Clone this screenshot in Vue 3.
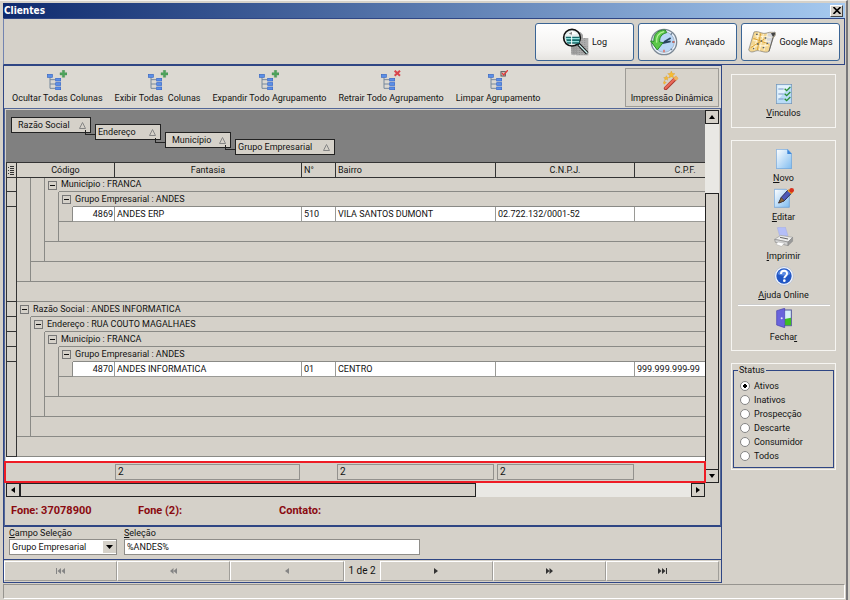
<script setup>
import { ref } from 'vue'

const treeActions = [
  { label: 'Ocultar Todas Colunas', badge: 'plus' },
  { label: 'Exibir Todas  Colunas', badge: 'plus' },
  { label: 'Expandir Todo Agrupamento', badge: 'plus' },
  { label: 'Retrair Todo Agrupamento', badge: 'cross' },
  { label: 'Limpar Agrupamento', badge: 'check' }
]

const groupFields = ['Razão Social', 'Endereço', 'Município', 'Grupo Empresarial']

const rows = [
  { kind: 'group', level: 2, text: 'Município : FRANCA', first: true },
  { kind: 'group', level: 3, text: 'Grupo Empresarial : ANDES' },
  { kind: 'data', cells: ['4869', 'ANDES ERP', '510', 'VILA SANTOS DUMONT', '02.722.132/0001-52', ''] },
  { kind: 'footer', level: 3 },
  { kind: 'footer', level: 2 },
  { kind: 'footer', level: 1 },
  { kind: 'footer', level: 0 },
  { kind: 'group', level: 0, text: 'Razão Social : ANDES INFORMATICA' },
  { kind: 'group', level: 1, text: 'Endereço : RUA COUTO MAGALHAES' },
  { kind: 'group', level: 2, text: 'Município : FRANCA' },
  { kind: 'group', level: 3, text: 'Grupo Empresarial : ANDES' },
  { kind: 'data', cells: ['4870', 'ANDES INFORMATICA', '01', 'CENTRO', '', '999.999.999-99'] },
  { kind: 'footer', level: 3 },
  { kind: 'footer', level: 2 },
  { kind: 'footer', level: 1 },
  { kind: 'footer', level: 0 }
]

const statuses = ['Ativos', 'Inativos', 'Prospecção', 'Descarte', 'Consumidor', 'Todos']
const status = ref('Ativos')
const field = ref('Grupo Empresarial')
const query = ref('%ANDES%')
</script>

<template>
  <div class="window">
    <header class="titlebar">
      <h1>Clientes</h1>
      <button class="close" aria-label="Fechar janela">
        <svg width="8" height="7" viewBox="0 0 8 7"><path d="M0.5 0 7.5 7M7.5 0 0.5 7" stroke="#000" stroke-width="1.6" /></svg>
      </button>
    </header>

    <div class="topbar">
      <button class="big">
        <svg width="27" height="28" viewBox="0 0 81 84">
          <path d="M25 12h30l8 8v60H28z" fill="#a4a4a4" />
          <path d="M45 30h34v52H45z" fill="#adadad" />
          <path d="M28 56h50M28 62h50M28 68h50M28 74h50M36 50v32M44 50v32M52 30v52M60 30v52M68 30v52" stroke="#858585" stroke-width="2" stroke-dasharray="3 3" />
          <circle cx="30" cy="29" r="25" fill="#e4eeee" stroke="#111" stroke-width="5" />
          <path d="M14 20 30 8l16 10z" fill="#fff" />
          <path d="M20 17l10-6v9z" fill="#888" />
          <path d="M11 26h42v21H16z" fill="#176b6b" />
          <path d="M11 32h42M13 41h38" stroke="#8fe0dc" stroke-width="4" />
          <path d="M29 24v26" stroke="#fff" stroke-width="3" />
          <path d="M49 48 76 76" stroke="#111" stroke-width="10" />
          <path d="M51 50 76 76" stroke="#c9f0ee" stroke-width="4" />
        </svg>
        <span>Log</span>
      </button>
      <button class="big">
        <svg width="28" height="28" viewBox="0 0 84 84">
          <circle cx="42" cy="42" r="38" fill="#e9f1fb" stroke="#7c8894" stroke-width="4" />
          <circle cx="42" cy="42" r="31" fill="#b9d6f6" stroke="#a9bacd" stroke-width="3" />
          <path d="M42 42 62 30M34 46l28-6" stroke="#28455f" stroke-width="5" />
          <path d="M66 42h8M62 62l4 4M62 20l4-4" stroke="#6a7f94" stroke-width="4" />
          <path d="M42 65v8M68 42h5" stroke="#e8604c" stroke-width="4" />
          <path d="M46 6C22 5 10 20 12 40L2 39l20 27 17-22-10-2C28 28 34 18 50 14z" fill="#5cc84a" stroke="#2b8a2b" stroke-width="3" />
          <path d="M42 11C25 15 18 26 20 44" fill="none" stroke="#b6f09a" stroke-width="4" />
        </svg>
        <span>Avançado</span>
      </button>
      <button class="big maps">
        <svg width="28" height="24" viewBox="0 0 84 72">
          <path d="M18 6c14-5 24 8 38 3s20 0 25-3c4 5 0 14-5 17L63 64c-13 8-28-6-40-1S6 66 2 60z" fill="#f3d690" stroke="#777" stroke-width="2" />
          <path d="M58 9c8 3 16-3 22-2 3 6-2 12-6 15L68 44 52 36z" fill="#d5d8de" />
          <path d="M22 18 70 22M16 32l51 2M10 48l51-1M32 8 18 60M46 12 34 62M58 12 48 62" stroke="#fff6dc" stroke-width="3" />
          <path d="M16 25 62 42M38 10 28 60M8 53l40-25" stroke="#dba436" stroke-width="3" />
          <path d="M24 13h5M50 24h5M27 42h5M44 53h5M15 56h4M38 33h4M56 40h4" stroke="#54626e" stroke-width="4" />
          <path d="M69 10c4-2 9-3 12-2 1 5-2 10-6 13z" fill="#444" />
          <path d="M75 22 63 64" fill="none" stroke="#666" stroke-width="3" />
        </svg>
        <span>Google Maps</span>
      </button>
    </div>

    <div class="content">
      <main class="main">
        <nav class="toolbar" aria-label="Colunas e agrupamento">
          <button v-for="a in treeActions" :key="a.label" class="tool">
            <svg width="20" height="20" viewBox="0 0 60 60">
              <path d="M9 22v33h16M9 29h16M9 42h16" fill="none" stroke="#77889c" stroke-width="3" />
              <rect x="1" y="13" width="15" height="9" fill="#5b8fe8" stroke="#3a68c0" stroke-width="2" />
              <rect x="26" y="25" width="15" height="8" fill="#5b8fe8" stroke="#3566c8" stroke-width="2" />
              <rect x="26" y="38" width="15" height="8" fill="#5b8fe8" stroke="#3566c8" stroke-width="2" />
              <rect x="26" y="51" width="15" height="8" fill="#5b8fe8" stroke="#3566c8" stroke-width="2" />
              <path v-if="a.badge === 'plus'" d="M46 1h7v7h7v7h-7v7h-7v-7h-7V8h7z" fill="#4ea35c" stroke="#3b8a4a" />
              <path v-else-if="a.badge === 'cross'" d="M41 2 57 17M57 2 41 17" stroke="#d8444c" stroke-width="6" />
              <g v-else fill="none">
                <rect x="39" y="5" width="13" height="13" stroke="#555" stroke-width="3" />
                <path d="M42 9l5 6L60 0" stroke="#e23a3a" stroke-width="4" />
              </g>
            </svg>
            <span>{{ a.label }}</span>
          </button>
          <button class="tool framed">
            <svg width="17" height="19" viewBox="0 0 51 57">
              <path d="M8 52 38 22" stroke="#a93a32" stroke-width="11" stroke-linecap="round" />
              <path d="M8 51 35 24" stroke="#ea6a58" stroke-width="7" stroke-linecap="round" />
              <path d="M35 25 43 18" stroke="#f0b45c" stroke-width="11" />
              <path d="M25 0l3 7 8 1-6 5 2 8-7-4-7 4 2-8-6-5 8-1zM10 14l2 5 5 1-4 3 1 5-4-3-5 3 1-5-4-3 6-1zM4 29l2 4 4 1-3 3-3 3-3-4z" fill="#f6bd32" stroke="#d8952a" />
            </svg>
            <span>Impressão Dinâmica</span>
          </button>
        </nav>

        <section class="gridpanel">
          <div class="gridarea">
            <div class="gridview">
              <div class="groupbox">
                <button v-for="(g, i) in groupFields" :key="g" class="chip" :class="'chip' + i">
                  <span>{{ g }}</span>
                  <svg width="7" height="7" viewBox="0 0 7 7"><path d="M3.5 0.5 6.5 6.5h-6z" fill="none" stroke="#858585" /></svg>
                </button>
              </div>
              <div class="tablewrap">
                <table>
                  <colgroup>
                    <col class="c-ind"><col class="c-in"><col class="c-in"><col class="c-in"><col class="c-in">
                    <col class="c-cod"><col class="c-fan"><col class="c-num"><col class="c-bai"><col class="c-cnpj"><col>
                  </colgroup>
                  <thead>
                    <tr>
                      <th class="ind">
                        <svg width="7" height="9" viewBox="0 0 7 9"><path d="M0 1.5h1M0 4.5h1M0 7.5h1M2 .5h4M2 2.5h4M2 4.5h4M2 6.5h4M2 8.5h4" stroke="#333" /></svg>
                      </th>
                      <th colspan="5">Código</th>
                      <th>Fantasia</th>
                      <th class="left">N°</th>
                      <th class="left">Bairro</th>
                      <th>C.N.P.J.</th>
                      <th>C.P.F.</th>
                    </tr>
                  </thead>
                  <tbody>
                    <tr v-for="(r, i) in rows" :key="i" :class="[r.kind, { first: r.first, outer: r.kind === 'footer' && r.level === 0 }]">
                      <template v-if="r.kind === 'group'">
                        <td class="ind"></td>
                        <td v-for="n in r.level" :key="n" class="indent"></td>
                        <td class="exp"><button class="expander" aria-label="Recolher grupo"></button></td>
                        <td class="gtext" :colspan="9 - r.level">{{ r.text }}</td>
                      </template>
                      <template v-else-if="r.kind === 'data'">
                        <td class="ind" rowspan="5"></td>
                        <td v-for="n in 4" :key="n" class="indent" :class="{ under: n === 4 }"></td>
                        <td v-for="(c, j) in r.cells" :key="'c' + j" class="val" :class="{ num: j === 0 }">{{ c }}</td>
                      </template>
                      <template v-else>
                        <td v-for="n in r.level" :key="n" class="indent" :class="{ under: n === r.level }"></td>
                        <td class="foot" :colspan="10 - r.level"></td>
                      </template>
                    </tr>
                  </tbody>
                </table>
              </div>
              <div class="summary">
                <output class="s-fan">2</output>
                <output class="s-bai">2</output>
                <output class="s-cnpj">2</output>
              </div>
            </div>
            <div class="vscroll">
              <button class="sb" aria-label="Rolar para cima"><svg width="6" height="4" viewBox="0 0 6 4"><path d="M0 4 3 0l3 4z" /></svg></button>
              <div class="vtrack"><div class="vthumb"></div></div>
              <button class="sb" aria-label="Rolar para baixo"><svg width="6" height="4" viewBox="0 0 6 4"><path d="M0 0h6L3 4z" /></svg></button>
            </div>
          </div>
          <div class="hscroll">
            <button class="sb" aria-label="Rolar para a esquerda"><svg width="4" height="6" viewBox="0 0 4 6"><path d="M4 0v6L0 3z" /></svg></button>
            <div class="htrack"><div class="hthumb"></div></div>
            <button class="sb" aria-label="Rolar para a direita"><svg width="4" height="6" viewBox="0 0 4 6"><path d="M0 0v6l4-3z" /></svg></button>
          </div>
          <div class="phones">
            <span>Fone: 37078900</span><span>Fone (2):</span><span>Contato:</span>
          </div>
        </section>

        <form class="filter" @submit.prevent>
          <div class="f-field">
            <label for="campo"><u>C</u>ampo Seleção</label>
            <div class="selectwrap">
              <select id="campo" v-model="field"><option>Grupo Empresarial</option></select>
              <svg width="7" height="4" viewBox="0 0 7 4"><path d="M0 0h7L3.5 4z" /></svg>
            </div>
          </div>
          <div class="f-query">
            <label for="selecao"><u>S</u>eleção</label>
            <input id="selecao" v-model="query" type="text">
          </div>
        </form>

        <nav class="pager" aria-label="Registros">
          <button disabled aria-label="Primeiro"><svg width="9" height="6" viewBox="0 0 9 6"><path d="M0 0h1v6H0zM5 0v6L1.5 3zM9 0v6L5.5 3z" fill="#858585" /></svg></button>
          <button disabled aria-label="Página anterior"><svg width="7" height="6" viewBox="0 0 7 6"><path d="M3.5 0v6L0 3zM7 0v6L3.5 3z" fill="#858585" /></svg></button>
          <button disabled aria-label="Anterior"><svg width="4" height="6" viewBox="0 0 4 6"><path d="M4 0v6L0 3z" fill="#858585" /></svg></button>
          <span>1 de 2</span>
          <button aria-label="Próximo"><svg width="4" height="6" viewBox="0 0 4 6"><path d="M0 0v6l4-3z" fill="#333" /></svg></button>
          <button aria-label="Próxima página"><svg width="7" height="6" viewBox="0 0 7 6"><path d="M0 0v6l3.5-3zM3.5 0v6L7 3z" fill="#333" /></svg></button>
          <button aria-label="Último"><svg width="9" height="6" viewBox="0 0 9 6"><path d="M0 0v6l3.5-3zM4 0v6l3.5-3zM8 0h1v6H8z" fill="#333" /></svg></button>
        </nav>
      </main>

      <aside class="side">
        <div class="panel links">
          <button class="act">
            <svg width="16" height="20" viewBox="0 0 48 60">
              <rect x="1" y="1" width="46" height="58" fill="#b9dcf7" stroke="#6f93b8" stroke-width="2" />
              <path d="M4 4h40L4 50z" fill="#e3f2fd" />
              <path d="M7 15h16M7 30h16M7 45h16" stroke="#7795c4" stroke-width="3" />
              <path d="M26 14l6 6L43 9M26 29l6 6 11-11M26 44l6 6 11-11" fill="none" stroke="#2a8f35" stroke-width="4" />
            </svg>
            <span><u>V</u>inculos</span>
          </button>
        </div>

        <div class="panel actions">
          <button class="act">
            <svg width="16" height="20" viewBox="0 0 48 60">
              <defs><linearGradient id="sheet" x1="0" y1="0" x2="1" y2="1"><stop offset="0" stop-color="#fff" /><stop offset="1" stop-color="#7fbcf0" /></linearGradient></defs>
              <path d="M1 1h34l12 13v45H1z" fill="url(#sheet)" stroke="#5f9ad8" stroke-width="2" />
              <path d="M34 1v14h13z" fill="#3d86d8" />
            </svg>
            <span><u>N</u>ovo</span>
          </button>
          <button class="act">
            <svg width="20" height="20" viewBox="0 0 60 60">
              <path d="M1 4h36l9 10v44H1z" fill="url(#sheet)" stroke="#5f9ad8" stroke-width="2" />
              <path d="M14 45 22 28 42 6l11 9-23 24z" fill="#4d59b8" stroke="#2b2b55" stroke-width="3" />
              <path d="M14 45 22 29l9 9z" fill="#8c6a3a" stroke="#4d3a22" stroke-width="2" />
              <path d="M40 8l5-5 12 10-5 6z" fill="#e8a325" />
              <circle cx="53" cy="7" r="7" fill="#d8301c" />
            </svg>
            <span><u>E</u>ditar</span>
          </button>
          <button class="act">
            <svg width="20" height="20" viewBox="0 0 60 60">
              <path d="M10 2c8-3 15 1 24-2l8 26-24 5z" fill="#b4bef8" stroke="#96a2e0" />
              <path d="M2 37 20 25l36 6-14 14z" fill="#ececec" stroke="#9a9a9a" stroke-width="2" />
              <path d="M2 37l40 8v11L4 46z" fill="#d2d2d2" stroke="#8a8a8a" stroke-width="2" />
              <path d="M42 45l14-14v12L42 56z" fill="#9a9a9a" stroke="#777" />
              <path d="M12 45 32 49 22 58 6 52z" fill="#fff" stroke="#999" />
              <path d="M18 31l24 5" stroke="#666" stroke-width="3" />
            </svg>
            <span><u>I</u>mprimir</span>
          </button>
          <button class="act">
            <svg width="20" height="20" viewBox="0 0 60 60">
              <circle cx="30" cy="30" r="28" fill="#f5f8fe" stroke="#a9b6cf" stroke-width="2" />
              <circle cx="30" cy="30" r="23" fill="#2257c4" />
              <path d="M11 24a20 20 0 0 1 38 0c-12 6-26 6-38 0z" fill="#5d8ce4" />
              <path d="M21 24c0-13 19-12 18-1 0 7-8 7-8 14" fill="none" stroke="#fff" stroke-width="6" />
              <circle cx="31" cy="44" r="4" fill="#fff" />
            </svg>
            <span><u>A</u>juda Online</span>
          </button>
          <hr>
          <button class="act">
            <svg width="16" height="20" viewBox="0 0 48 60">
              <rect x="18" y="6" width="28" height="47" fill="#d8f0fb" stroke="#52569a" stroke-width="3" />
              <path d="M26 33l19-4v23H26z" fill="#3fbf22" />
              <path d="M2 8 26 1v58L2 51z" fill="#6a64dc" stroke="#453fae" stroke-width="2" />
              <circle cx="17" cy="31" r="3" fill="#e8e8ff" />
            </svg>
            <span>Fecha<u>r</u></span>
          </button>
        </div>

        <div class="panel statusbox">
          <fieldset>
            <legend>Status</legend>
            <label v-for="s in statuses" :key="s"><input v-model="status" type="radio" name="status" :value="s"><span>{{ s }}</span></label>
          </fieldset>
        </div>
      </aside>
    </div>

    <footer class="statusbar"></footer>
  </div>
</template>

<style>
body { background: #d5d1c9; }
</style>

<style scoped>
.window {
  --face: #d5d1c9;
  --navy: #2f4684;
  box-sizing: border-box;
  min-height: 100vh;
  display: flex;
  flex-direction: column;
  padding: 2px 1px 1px 3px;
  border-top: 1px solid #f4f2ee;
  border-right: 2px solid #77777a;
  margin-right: 2px;
  background: var(--face);
  color: #111;
  font: 9px/14px Roboto, sans-serif;
}
.window * { box-sizing: border-box; }
button, input, select { font: inherit; color: inherit; margin: 0; }
button { padding: 0; border: 0; background: none; border-radius: 0; }
svg { display: block; flex: none; }

.titlebar {
  height: 15px;
  display: flex;
  align-items: center;
  justify-content: space-between;
  padding: 0 2px 0 1px;
  background: linear-gradient(90deg, #0e2a6e, #a6caf0);
}
h1 { margin: 0; color: #fff; font: bold 10px/14px "DejaVu Sans Condensed", sans-serif; }
.close {
  width: 13px; height: 12px;
  display: flex; align-items: center; justify-content: center;
  background: var(--face);
  border: 1px solid; border-color: #fff #444 #444 #fff;
}

.topbar {
  height: 47px;
  display: flex;
  justify-content: flex-end;
  align-items: center;
  gap: 4px;
  padding: 0 4px;
  border: 1px solid var(--navy);
  border-left-color: #7384b0;
}
.big {
  width: 99px; height: 38px;
  display: flex; align-items: center; justify-content: center;
  gap: 3px;
  border: 1px solid #3b6595;
  border-radius: 3px;
  background: linear-gradient(#fff, #f3f2f0 70%, #e6e4e0);
}
.big:nth-child(2) { gap: 7px; }

.content { flex: 1; display: flex; }
.main {
  flex: 1; min-width: 0;
  display: flex; flex-direction: column;
  border: 1px solid var(--navy);
}
.toolbar {
  height: 42px;
  display: flex;
  align-items: center;
  gap: 12px;
  padding: 0 2px 0 8px;
  background: #dcd9d2;
}
.tool { display: flex; flex-direction: column; align-items: center; gap: 1px; white-space: pre; }
.framed { margin-left: auto; padding: 2px 5px; height: 39px; border: 1px solid #9d9b96; background: #d7d3cb; }

.gridpanel {
  flex: 1;
  display: flex; flex-direction: column;
  border: 1px solid #536797;
  border-bottom: 2px solid var(--navy);
  padding: 1px 1px 0 1px;
}
.gridarea { flex: 1; display: flex; }
.gridview { flex: 1; min-width: 0; display: flex; flex-direction: column; }
.groupbox {
  height: 52px;
  display: flex; align-items: flex-start;
  gap: 4px;
  padding: 7px 5px;
  background: #808080;
}
.chip {
  position: relative;
  height: 16px;
  display: flex; align-items: center; justify-content: space-between;
  padding: 0 4px 0 2px;
  border: 1px solid #222;
  background: var(--face);
  white-space: nowrap;
}
.chip0 { width: 80px; padding-left: 6px; }
.chip1 { width: 66px; margin-top: 7px; }
.chip2 { width: 66px; margin-top: 15px; padding-left: 6px; }
.chip3 { width: 100px; margin-top: 22px; }
/* elbow joining a chip to the one before it */
.chip + .chip::before {
  content: "";
  position: absolute;
  right: 100%; bottom: 4px;
  width: 10px; height: 4px;
  border: solid #222; border-width: 0 0 1px 1px;
}

.tablewrap { flex: 1; overflow: hidden; background: #fff; }
table {
  width: calc(100% + 31px);
  table-layout: fixed;
  border-collapse: separate;
  border-spacing: 0;
}
.c-ind { width: 11px; }
.c-in { width: 14px; }
.c-cod { width: 42px; }
.c-fan { width: 187px; }
.c-num { width: 34px; }
.c-bai { width: 160px; }
.c-cnpj { width: 139px; }
td, th {
  height: 15px;
  padding: 0;
  background: var(--face);
  font-weight: normal;
  line-height: 13px;
  white-space: nowrap;
  overflow: hidden;
}
th { height: 16px; border: solid #333; border-width: 1px 1px 1px 0; }
th.left { text-align: left; padding-left: 2px; }
.ind { border: solid #333; border-width: 0 1px 1px 1px; }
th.ind { border-top-width: 1px; padding-left: 1px; }
.first td { height: 14px; }
.indent { border-right: 1px solid #8a8a86; }
.under, .foot, .gtext { border-bottom: 1px solid #8a8a86; }
.gtext { padding-left: 2px; }
.footer td { height: 20px; }
.val { padding-left: 2px; background: #fff; border: solid #9a9a96; border-width: 0 1px 1px 0; }
.num { text-align: right; padding: 0 1px 0 0; }
.expander {
  display: block;
  width: 9px; height: 9px;
  margin: 0 auto;
  border: 1px solid #777;
  background: linear-gradient(#111, #111) center / 5px 1px no-repeat;
}

.summary {
  height: 22px;
  margin: 0 -1px 0 -2px;
  display: grid;
  grid-template-columns: 109px 185px 37px 157px 3px 137px 1fr;
  align-items: center;
  border: 2px solid #ee1c25;
  font-size: 10px;
  position: relative;
}
.summary output { height: 16px; padding-left: 2px; border: 1px solid #93918d; }
.s-fan { grid-column: 2; }
.s-bai { grid-column: 4; }
.s-cnpj { grid-column: 6; }

.sb {
  width: 14px; height: 14px;
  display: flex; align-items: center; justify-content: center;
  border: 1px solid #222;
  background: var(--face);
}
.vscroll { width: 14px; display: flex; flex-direction: column; }
.vtrack { flex: 1; display: flex; flex-direction: column; justify-content: flex-end; background: #e9e8e4; }
.vthumb { height: 80%; border: 1px solid #222; border-bottom: 0; background: var(--face); }
.hscroll { display: flex; padding-right: 14px; }
.htrack { flex: 1; background: #e9e8e4; }
.hthumb { width: 68%; height: 14px; border: 1px solid #222; background: var(--face); }
.phones {
  height: 28px;
  display: grid;
  grid-template-columns: 127px 141px 1fr;
  align-items: center;
  padding-left: 5px;
  color: #8a0a10;
  font-weight: bold;
  font-size: 11px;
}

.filter { height: 33px; display: flex; gap: 7px; padding: 0 5px; border-bottom: 1px solid var(--navy); }
.filter label { display: block; height: 12px; line-height: 13px; }
.f-field { width: 108px; }
.f-query { width: 296px; }
.filter input, .filter select {
  display: block;
  width: 100%; height: 16px;
  padding: 0 2px;
  border: 1px solid #8f8d89;
  border-radius: 0;
  background: #fff;
  appearance: none;
}
.selectwrap { display: grid; align-items: center; }
.selectwrap > * { grid-area: 1 / 1; }
.selectwrap svg { justify-self: end; width: 13px; height: 12px; padding: 4px 3px; margin-right: 1px; background: var(--face); pointer-events: none; }

.pager { height: 22px; display: flex; padding: 1px 2px 1px 0; }
.pager button {
  flex: 1;
  display: flex; align-items: center; justify-content: center;
  border: 1px solid; border-color: #fff #a09e99 #a09e99 #fff;
}
.pager span { width: 36px; display: flex; align-items: center; justify-content: center; font-size: 10px; border-left: 1px solid #fff; }

.side { width: 123px; padding: 9px 9px; display: flex; flex-direction: column; gap: 12px; }
.panel { width: 105px; border: 1px solid #f6f5f2; }
.act { display: flex; flex-direction: column; align-items: center; width: 100%; line-height: 14px; gap: 2px; }
.links { height: 54px; padding-top: 9px; }
.actions { height: 211px; padding-top: 8px; display: flex; flex-direction: column; gap: 3px; }
hr { width: 92px; height: 2px; margin: -1px auto; border: 0; border-bottom: 1px solid #fff; flex: none; background: #ccc; }
.statusbox { height: 107px; padding: 0 1px 1px; }
fieldset { margin: 0; padding: 3px 0 0 6px; min-width: 0; height: 104px; border: 1px solid var(--navy); }
legend { margin-left: -2px; padding: 0 1px; line-height: 12px; }
fieldset label { display: flex; align-items: center; gap: 4px; height: 14px; }
fieldset input {
  appearance: none;
  width: 10px; height: 10px;
  border: 1px solid #858585;
  border-radius: 50%;
  background: #fff;
}
fieldset input:checked { background: radial-gradient(circle, #000 0 2px, #fff 2px); }

.statusbar { height: 15px; margin-top: 1px; border: 1px solid; border-color: #96948f #fff #fff #96948f; }
</style>
